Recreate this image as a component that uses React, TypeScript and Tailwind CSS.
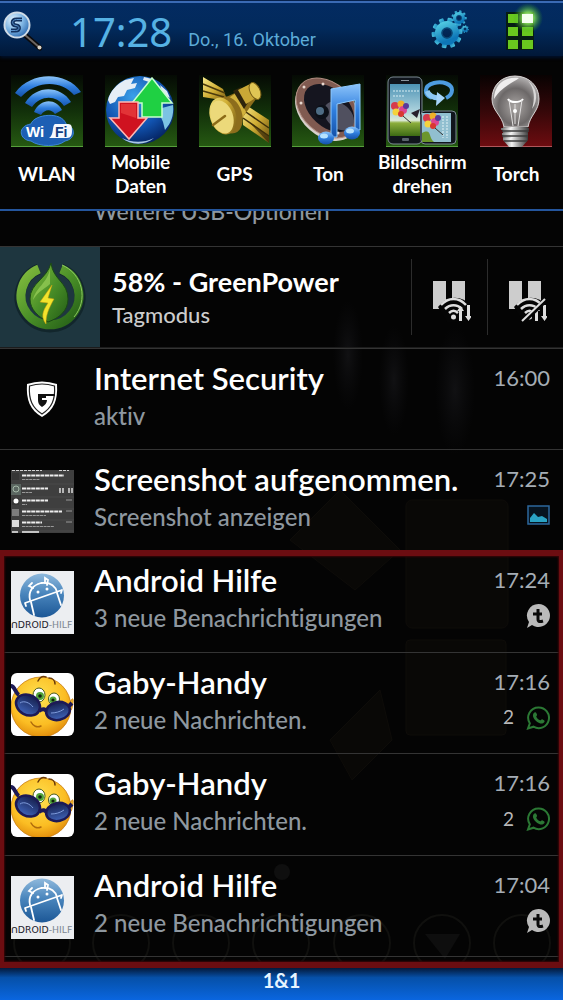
import type { ReactNode } from "react";

type Notice = {
  id: number;
  title: string;
  text: string;
  time: string;
  picture: ReactNode;
  badge?: ReactNode;
  count?: number;
};

function SearchIcon() {
  return (
    <svg viewBox="0 0 42 42" className="h-[42px] w-[42px]" aria-hidden="true">
      <defs>
        <radialGradient id="lens" cx="0.35" cy="0.3" r="0.8">
          <stop offset="0" stopColor="#e4f4ff" />
          <stop offset="0.5" stopColor="#7fb6e4" />
          <stop offset="1" stopColor="#1f5ea8" />
        </radialGradient>
      </defs>
      <path d="M25 26 40 39" stroke="#0a0a0c" strokeWidth="5" strokeLinecap="round" />
      <path d="M25 26 39 38" stroke="#6d6560" strokeWidth="2" />
      <circle cx="39.500" cy="38.500" r="2" fill="#d9d2c6" />
      <circle cx="17" cy="16" r="12.500" fill="url(#lens)" stroke="#cfdbe6" strokeWidth="2" />
      <path
        d="M22 10.500h-5.500c-5 0-5 5.500-.5 6 4 .5 4 5-.5 5H11"
        fill="none"
        stroke="#12315f"
        strokeWidth="4"
      />
      <path
        d="M22 10.500h-5.500c-5 0-5 5.500-.5 6 4 .5 4 5-.5 5H11"
        fill="none"
        stroke="#5a93cc"
        strokeWidth="1"
      />
    </svg>
  );
}

function Gear({ x, y, r, teeth }: { x: number; y: number; r: number; teeth: number }) {
  const angles = Array.from({ length: teeth }, (_, i) => (i * 360) / teeth);
  return (
    <g transform={`translate(${x} ${y})`}>
      {angles.map((a) => (
        <rect
          key={a}
          x={-r * 0.2}
          y={-r * 1.28}
          width={r * 0.4}
          height={r * 0.6}
          rx={r * 0.08}
          fill="url(#gear)"
          transform={`rotate(${a + 12})`}
        />
      ))}
      <circle r={r * 0.72} fill="none" stroke="url(#gear)" strokeWidth={r * 0.56} />
      <circle r={r * 0.42} fill="none" stroke="#0b4a78" strokeWidth={r * 0.12} />
    </g>
  );
}

function GearsIcon() {
  return (
    <svg viewBox="0 0 42 42" className="h-[42px] w-[42px]" aria-hidden="true">
      <defs>
        <linearGradient id="gear" x1="0" y1="0" x2="0.4" y2="1">
          <stop offset="0" stopColor="#4fc8e0" />
          <stop offset="1" stopColor="#0d76b8" />
        </linearGradient>
      </defs>
      <Gear x={18} y={24} r={12} teeth={10} />
      <Gear x={30} y={9} r={6} teeth={9} />
      <Gear x={36} y={20} r={3} teeth={8} />
    </svg>
  );
}

function GridIcon() {
  return (
    <svg viewBox="0 0 36 44" className="h-11 w-9 overflow-visible" aria-hidden="true">
      <defs>
        <radialGradient id="glow">
          <stop offset="0" stopColor="#ffffff" />
          <stop offset="0.4" stopColor="#8df05a" stopOpacity="0.8" />
          <stop offset="1" stopColor="#2f9a1a" stopOpacity="0" />
        </radialGradient>
      </defs>
      <rect x="3" y="4" width="28" height="38" fill="#061c14" />
      <g fill="#69c81e">
        <rect x="5" y="6" width="10" height="9" />
        <rect x="5" y="19" width="10" height="9" />
        <rect x="19" y="19" width="11" height="9" />
        <rect x="5" y="32" width="10" height="9" />
        <rect x="19" y="32" width="11" height="9" />
      </g>
      <circle cx="25" cy="10" r="15" fill="url(#glow)" />
      <rect x="19" y="6" width="11" height="9" fill="#f4fff0" />
    </svg>
  );
}

function Tile({ red, children }: { red?: boolean; children: ReactNode }) {
  return (
    <svg viewBox="0 0 94 76" className="h-[76px] w-[94px]" aria-hidden="true">
      <rect x="11" y="2" width="72" height="72" fill={red ? "url(#tileRed)" : "url(#tileGreen)"} />
      <path d="M11 73.500h72" stroke={red ? "#b0565a" : "#57a03c"} />
      {children}
    </svg>
  );
}

// gradients that several drawings share
function SharedDefs() {
  return (
    <svg className="absolute h-0 w-0" aria-hidden="true">
      <defs>
        <linearGradient id="tileGreen" x1="0" y1="0" x2="0" y2="1">
          <stop offset="0" stopColor="#050a04" />
          <stop offset="0.5" stopColor="#12300a" />
          <stop offset="1" stopColor="#265a12" />
        </linearGradient>
        <linearGradient id="tileRed" x1="0" y1="0" x2="0" y2="1">
          <stop offset="0" stopColor="#080202" />
          <stop offset="0.5" stopColor="#350709" />
          <stop offset="1" stopColor="#6e0c10" />
        </linearGradient>
        <linearGradient id="blue" x1="0" y1="0" x2="0" y2="1">
          <stop offset="0" stopColor="#8cc4fa" />
          <stop offset="0.5" stopColor="#2f7ede" />
          <stop offset="1" stopColor="#1450a8" />
        </linearGradient>
        <linearGradient id="gold" x1="0" y1="0" x2="1" y2="1">
          <stop offset="0" stopColor="#f6e98a" />
          <stop offset="0.5" stopColor="#d0ae34" />
          <stop offset="1" stopColor="#6a5010" />
        </linearGradient>
        <radialGradient id="earth" cx="0.4" cy="0.3" r="0.75">
          <stop offset="0" stopColor="#3aa0ea" />
          <stop offset="0.6" stopColor="#1153b0" />
          <stop offset="1" stopColor="#04205c" />
        </radialGradient>
        <linearGradient id="screen" x1="0" y1="0" x2="0" y2="1">
          <stop offset="0" stopColor="#4d93b4" />
          <stop offset="0.5" stopColor="#a9d0dc" />
          <stop offset="0.7" stopColor="#dbe9d6" />
          <stop offset="0.75" stopColor="#8cae3c" />
          <stop offset="1" stopColor="#3c6a14" />
        </linearGradient>
        <radialGradient id="bulb" cx="0.5" cy="0.6" r="0.6">
          <stop offset="0" stopColor="#aaa6a4" />
          <stop offset="0.6" stopColor="#6c6868" />
          <stop offset="1" stopColor="#b5b2b2" />
        </radialGradient>
        <linearGradient id="metal" x1="0" y1="0" x2="1" y2="0">
          <stop offset="0" stopColor="#6b6b6b" />
          <stop offset="0.35" stopColor="#f4f4f4" />
          <stop offset="0.7" stopColor="#8a8a8a" />
          <stop offset="1" stopColor="#3a3a3a" />
        </linearGradient>
        <linearGradient id="leaf" x1="0" y1="0" x2="1" y2="1">
          <stop offset="0" stopColor="#84bc3e" />
          <stop offset="0.5" stopColor="#4a9028" />
          <stop offset="1" stopColor="#235c16" />
        </linearGradient>
        <linearGradient id="ball" x1="0" y1="0" x2="0" y2="1">
          <stop offset="0" stopColor="#8fb9dc" />
          <stop offset="0.45" stopColor="#4a86bd" />
          <stop offset="1" stopColor="#1c5796" />
        </linearGradient>
        <radialGradient id="face" cx="0.45" cy="0.35" r="0.7">
          <stop offset="0" stopColor="#ffe352" />
          <stop offset="0.65" stopColor="#fbbd23" />
          <stop offset="1" stopColor="#dd8508" />
        </radialGradient>
        <linearGradient id="shade" x1="0" y1="0" x2="0" y2="1">
          <stop offset="0" stopColor="#16204e" />
          <stop offset="1" stopColor="#3f63b8" />
        </linearGradient>
        <radialGradient id="flame">
          <stop offset="0" stopColor="#111113" />
          <stop offset="1" stopColor="#0c0c0e" stopOpacity="0" />
        </radialGradient>
      </defs>
    </svg>
  );
}

function WifiTile() {
  return (
    <Tile>
      <g fill="url(#blue)">
        <path d="M15 20C31-2 66-2 81 19L74 22C61 7 37 7 21 24Z" />
        <path d="M25 30C36 12 60 12 71 29L64 33C56 22 41 22 32 34Z" />
        <path d="M34 39C40 25 56 25 62 37L55 41C51 36 45 36 41 42Z" />
      </g>
      <path
        d="M31 51c3-10 31-13 35 0 10 3 10 15-1 17-7 6-26 6-34 0-12-1-14-15 0-17Z"
        fill="#1d5fb4"
        stroke="#3c85d8"
      />
      <path d="M55 51h13c4 0 4 3 4 7s-1 7-5 7H49c5-2 3-13 6-14Z" fill="#f4f8ff" />
      <text x="26" y="64" fontSize="15" fontWeight="700" fontFamily="Liberation Sans, sans-serif" fill="#fff">
        Wi
      </text>
      <text x="55" y="64" fontSize="14" fontWeight="700" fontFamily="Liberation Sans, sans-serif" fill="#123c80">
        Fi
      </text>
    </Tile>
  );
}

function DataTile() {
  return (
    <Tile>
      <circle cx="46" cy="37" r="34" fill="url(#earth)" />
      <path d="M14 27c2-9 9-16 17-20l9-2-3 6 6-1-2 5-8 2-3 6-6 1-3 5-5 2Z" fill="#e6eef6" />
      <path d="m50 4 8 2-3 3-6-2ZM66 12l7 6 3 7-7-4Z" fill="#dfeaf4" />
      <path d="m68 35 11-3c1 11-2 18-8 25l-2-8-3-7Z" fill="#7cc3e4" />
      <path d="M28 65c8 4 20 6 32 0-9 8-24 7-32 0Z" fill="#a9c8e6" />
      <path d="m58 5 20 25H68v14H48V30H38Z" fill="#1fd043" stroke="#c8ffd0" strokeWidth="1.500" />
      <path d="M25 29h19v16h9L35 66 16 45h9Z" fill="#cf1220" stroke="#ffb9b4" strokeWidth="1.500" />
      <path d="M27 31h15v14L27 40Z" fill="#ee4a48" opacity="0.6" />
    </Tile>
  );
}

function GpsTile() {
  return (
    <Tile>
      <path d="m15 4 20 12 5 13-7-2-18-3Z" fill="url(#gold)" />
      <path d="m15 11 22 9M15 18l21 6" stroke="#4a3a0c" strokeWidth="1.500" />
      <path d="m55 30 26 17v23L55 52Z" fill="url(#gold)" />
      <path d="m55 37 26 18M55 45l26 18" stroke="#3e300a" strokeWidth="1.500" />
      <path d="m62 50 19 13v7Z" fill="#3a2c0a" opacity="0.7" />
      <path d="M36 25 62 13l6 13-16 22-10 9Z" fill="#8a6c1a" />
      <path d="m39 26 9-6 10 19-6 10Z" fill="#d2b23c" />
      <path d="m45 18 8-4 8 14-5 8Z" fill="#2d240c" />
      <path d="m50 17 14-7 7 13-13 8Z" fill="#c9a836" />
      <ellipse cx="67" cy="18" rx="5" ry="9" fill="#e0c654" stroke="#725a14" transform="rotate(-25 67 18)" />
      <ellipse cx="41" cy="42" rx="13" ry="19" fill="#8c6d1c" transform="rotate(-18 41 42)" />
      <ellipse cx="35" cy="43" rx="13" ry="19" fill="url(#gold)" transform="rotate(-18 35 43)" />
      <ellipse cx="34" cy="44" rx="11" ry="17" fill="#ecd97a" transform="rotate(-18 34 44)" />
      <path d="m25 52 12-9" stroke="#8c6c18" strokeWidth="2.500" strokeLinecap="round" />
    </Tile>
  );
}

function SoundTile() {
  return (
    <Tile>
      <ellipse cx="45" cy="38" rx="25" ry="35" fill="#d8d0cc" transform="rotate(-48 45 38)" />
      <ellipse cx="46" cy="35" rx="25" ry="35" fill="#805a50" stroke="#b08c80" transform="rotate(-48 46 35)" />
      <ellipse cx="48" cy="35" rx="19" ry="29" fill="#15151f" transform="rotate(-48 48 35)" />
      <ellipse cx="58" cy="43" rx="12" ry="17" fill="#50505f" transform="rotate(-48 58 43)" />
      <circle cx="41" cy="39" r="7" fill="#0c1018" />
      <circle cx="39" cy="38" r="4" fill="#4e6c84" />
      <g fill="#e8d8d0">
        <circle cx="23" cy="14" r="1.500" />
        <circle cx="42" cy="11" r="1.500" />
        <circle cx="20" cy="30" r="1.500" />
        <circle cx="57" cy="60" r="1.500" />
      </g>
      <path d="M50 16 79 11v46h-5V27l-18 4v33h-6Z" fill="url(#blue)" stroke="#8ccaff" />
      <ellipse cx="45" cy="65" rx="8" ry="6.500" fill="url(#blue)" />
      <ellipse cx="71" cy="60" rx="8" ry="6.500" fill="url(#blue)" />
      <ellipse cx="43" cy="63" rx="4" ry="2.500" fill="#b6e2ff" />
      <ellipse cx="69" cy="58" rx="4" ry="2.500" fill="#b6e2ff" />
    </Tile>
  );
}

function Balloons() {
  return (
    <g>
      <circle cx="4" cy="4" r="4" fill="#d63a4c" />
      <circle cx="10" cy="2" r="3.500" fill="#f0b028" />
      <circle cx="12" cy="8" r="4" fill="#dc4590" />
      <circle cx="5" cy="10" r="3.500" fill="#f4d23c" />
      <circle cx="15" cy="4" r="3" fill="#5a3a9a" />
      <circle cx="10" cy="12" r="3" fill="#d83830" />
      <path d="m12 14 8 7" stroke="#333" />
    </g>
  );
}

function RotateTile() {
  return (
    <Tile>
      <rect x="13" y="4" width="34" height="67" rx="5" fill="#10151c" stroke="#7c8a94" />
      <rect x="15" y="11" width="30" height="52" fill="url(#screen)" />
      <path d="M26 7.500h8" stroke="#8a949c" />
      <path d="M18 18h26M18 23h12" stroke="#d8eef4" strokeDasharray="2 1" />
      <g transform="translate(16 29)">
        <Balloons />
      </g>
      <path d="m36 40 9-4-3 9Z" fill="#28202c" />
      <rect x="27" y="65" width="7" height="3" rx="1" fill="#59636c" />
      <rect x="46" y="38" width="35" height="33" rx="4" fill="#10151c" stroke="#7c8a94" />
      <rect x="47" y="40" width="29" height="29" fill="#91bfd0" />
      <path d="M47 60c10-5 6 4 12 9H47Z" fill="#6c962c" />
      <path d="M68 43v22M72 43v22" stroke="#e2f2f6" strokeDasharray="2 1" />
      <g transform="translate(48 41)">
        <Balloons />
      </g>
      <path
        d="M57 25c-8-3-9-12 2-15 9-2 18 1 18 7 0 3-2 6-6 8"
        fill="none"
        stroke="#4d9ce0"
        strokeWidth="4"
      />
      <path d="M52 18c2 5 7 7 12 7" fill="none" stroke="#8cc8f4" strokeWidth="5" />
      <path d="m62 19 8 6-9 8Z" fill="#a6d6fa" />
    </Tile>
  );
}

function TorchTile() {
  return (
    <Tile red>
      <path
        d="M46 3c14 0 24 10 24 23 0 12-9 16-11 28H35C33 42 23 38 23 26 23 13 32 3 46 3Z"
        fill="url(#bulb)"
        stroke="#d6d3d3"
      />
      <path d="M25 26C25 12 36 3 50 5c-6 5-17 8-25 21Z" fill="#f0eeee" />
      <path d="M59 8c9 6 11 19 4 28 3-10 3-20-4-28Z" fill="#d8d6d6" />
      <path d="M39 26c2 4 12 4 15 0" fill="none" stroke="#fff" strokeWidth="2" />
      <path d="m40 27 4 26M53 27l-4 26M46 31v20" stroke="#e2e0e0" />
      <circle cx="46" cy="38" r="2" fill="#fff" />
      <path d="M34 54h25v13l-6 7H40l-6-7Z" fill="url(#metal)" />
      <path d="M33 58h27M33 63h26M35 68h23" stroke="#3c3c3c" strokeWidth="1.500" />
      <path d="M32 55h28v2H32ZM33 60h26v2H33ZM34 65h24v2H34Z" fill="url(#metal)" />
    </Tile>
  );
}

function PowerLogo() {
  return (
    <svg viewBox="0 0 100 100" className="h-[100px] w-[100px] bg-[#1e363f]" aria-hidden="true">
      <path d="M61 22a30 30 0 1 1-22 0" fill="none" stroke="#12262c" strokeWidth="11" />
      <path d="M61 22a29 29 0 1 1-22 0" fill="none" stroke="url(#leaf)" strokeWidth="9" />
      <path d="M62 18a33 33 0 0 1 12 52" fill="none" stroke="#8cc860" strokeWidth="1" />
      <path
        d="M51 16c2 17 17 19 17 36 0 12-9 19-20 23-9-5-18-12-18-23 0-16 17-20 21-36Z"
        fill="url(#leaf)"
        stroke="#1a4a14"
      />
      <path d="M50 21c-2 15-15 20-17 32 5-9 13-12 17-16Z" fill="#9ad05a" opacity="0.7" />
      <path d="m52 38-12 17 8 1c-6 9-7 14-2 21 0-9 2-14 8-25l-6-1Z" fill="#f2e42c" stroke="#d39c10" strokeWidth="0.500" />
    </svg>
  );
}

function PauseDataIcon({ off }: { off?: boolean }) {
  return (
    <svg viewBox="0 0 38 42" className="h-[42px] w-[38px]" aria-hidden="true">
      <path d="M0 1h13v28H0ZM19 1h13v28H19Z" fill="#cdcdcd" />
      <path d="M5 27a20 20 0 0 1 33-1l-5 16H14Z" fill="#050505" />
      <g fill="none" stroke="#dedede" strokeWidth="2.500">
        <path d="M8 25c7-8 18-8 25 0" />
        <path d="M12 29c5-5 12-5 17 0" />
        <path d="M16 33c3-3 6-3 9 0" />
      </g>
      <circle cx="20.500" cy="37" r="2.500" fill="#dedede" />
      <path d="M27.500 41V28M35.500 25v13" stroke="#dedede" strokeWidth="3" />
      <path d="m24 31 3.500-5 3.500 5ZM32 36l3.500 5 3.500-5Z" fill="#dedede" />
      {off && (
        <>
          <path d="M14 42 37 20" stroke="#050505" strokeWidth="4.500" />
          <path d="M13 41 36 19" stroke="#dedede" strokeWidth="2" />
        </>
      )}
    </svg>
  );
}

function ShieldPicture() {
  return (
    <svg viewBox="0 0 63 63" className="h-[63px] w-[63px]" aria-hidden="true">
      <path d="M16 15q15-5 30 0c1 16-3 26-15 33C19 41 15 31 16 15Z" fill="#fff" />
      <path d="M18.500 17q12.500-4 25 0c1 14-3 22-12.500 28C21.500 39 17.500 31 18.500 17Z" fill="none" stroke="#222" strokeWidth="1.200" />
      <path d="M27 25h8v4h-4v2h5c0 3-2 5-5 7-3-2-4-4-4-7Z" fill="#111" />
      <path d="M35 26h9" stroke="#111" strokeWidth="2" />
    </svg>
  );
}

function ScreenshotPicture() {
  const rows = [5, 18, 30, 41, 52];
  return (
    <svg viewBox="0 0 63 63" className="h-[63px] w-[63px]" aria-hidden="true">
      <rect width="63" height="63" fill="#3f3f3f" />
      <path d="M1 .5h30M48 .5h10" stroke="#d0d0d0" strokeDasharray="3 1" />
      {rows.map((y, i) => (
        <g key={y}>
          <rect x="1" y={y - 2} width="7" height="7" fill={i === 4 ? "#ddd" : i === 3 ? "#7d7d7d" : "#363636"} />
          <path d={`M11 ${y + 0.5}h${[42, 26, 26, 40, 20][i]}`} stroke="#eee" strokeWidth="2" strokeDasharray="4 0.600" />
          <path d={`M11 ${y + 4.5}h${[18, 10, 5, 24, 32][i]}`} stroke="#999" strokeDasharray="3 0.600" />
          <path d={`M11 ${y + 9}h52`} stroke="#555" strokeWidth="0.500" />
          {i > 1 && <path d={`M55 ${y}h6`} stroke="#999" />}
        </g>
      ))}
      <rect y="14" width="10" height="11" fill="#5b6661" />
      <circle cx="5" cy="19" r="3" fill="none" stroke="#a4b8a8" />
      <path d="M49 18v5M52 18v5M58 18v5M61 18v5" stroke="#ddd" strokeWidth="1.500" />
      <circle cx="5" cy="31" r="2.500" fill="#fff" />
      <path d="M1 62h6M11 62h17" stroke="#eee" strokeWidth="1.500" />
    </svg>
  );
}

function AndroidPicture() {
  return (
    <svg viewBox="0 0 63 63" className="h-[63px] w-[63px] bg-[#eceef1]" aria-hidden="true">
      <circle cx="31" cy="24.500" r="22" fill="url(#ball)" />
      <g fill="none" stroke="#fff" strokeWidth="1.800" strokeLinecap="round">
        <path d="M19 29c-2-9 3-15 11-17 8-1 14 2 16 9" />
        <path d="m14 32 37-13M14 32l1 3M51 19l-1 3" />
        <path d="m20 31 3 13M46 22l4 12" />
        <path d="m22 17-4-2 3-3M34 12V7l3 2-1 5" />
      </g>
      <circle cx="27" cy="21" r="1.500" fill="#fff" />
      <circle cx="36" cy="18" r="1.500" fill="#fff" />
      <text x="0" y="57" fontSize="9.300" fontFamily="DejaVu Sans, sans-serif" fill="#1c222c">
        ᑎDROID
        <tspan fill="#7d8792">-HILF</tspan>
      </text>
    </svg>
  );
}

function SmileyPicture() {
  return (
    <svg viewBox="0 0 63 63" className="h-[63px] w-[63px] rounded-md bg-white" aria-hidden="true">
      <circle cx="30" cy="34" r="30" fill="url(#face)" stroke="#c87c10" strokeWidth="0.800" />
      <path d="M59 30c2-6 4-5 3 0s-1 8-4 8" fill="#f0b82c" stroke="#c87c10" strokeWidth="0.800" />
      <g fill="none" stroke="#6c3c08" strokeWidth="1.500" strokeLinecap="round">
        <path d="M27 8c2-4 5-5 8-4M38 5c4 0 6 3 6 6" />
        <path d="M20 49c2 4 6 6 10 4" stroke="#b06c0c" />
      </g>
      <ellipse cx="28" cy="22" rx="6" ry="7" fill="#fff" stroke="#4a5a1c" />
      <ellipse cx="43" cy="26" rx="5.500" ry="6" fill="#fff" stroke="#4a5a1c" />
      <circle cx="29" cy="23" r="4" fill="#52a43c" />
      <circle cx="42" cy="27" r="3.500" fill="#52a43c" />
      <circle cx="29" cy="23" r="1.800" fill="#10200c" />
      <circle cx="42" cy="27" r="1.600" fill="#10200c" />
      <path d="M0 13c4 0 4 7 8 9M28 38c4-3 6-2 9 1M57 34l4-4" fill="none" stroke="#1d1a56" strokeWidth="4" />
      <ellipse cx="17" cy="32" rx="12.500" ry="10" fill="url(#shade)" stroke="#1d1a56" strokeWidth="2.500" transform="rotate(28 17 32)" />
      <ellipse cx="47" cy="38" rx="12" ry="9" fill="url(#shade)" stroke="#1d1a56" strokeWidth="2.500" transform="rotate(-12 47 38)" />
      <path d="M9 30c4-3 10 0 13 4M40 40c4 0 9-1 13-4" fill="none" stroke="#7f9cdc" strokeWidth="1" />
    </svg>
  );
}

function ImageBadge() {
  return (
    <svg viewBox="0 0 24 24" className="size-6" aria-hidden="true">
      <rect x="2" y="3" width="21" height="18" fill="#061420" stroke="#2c679c" strokeWidth="1.500" />
      <path d="M4 19v-4l4-5 4 4 4-1 5 3v3Z" fill="#2aa3c4" />
    </svg>
  );
}

function TapatalkBadge() {
  return (
    <svg viewBox="0 0 24 24" className="size-6" aria-hidden="true">
      <path d="M12.500 0A11.500 11.500 0 1 1 6 21L1 24l2-6A11.500 11.500 0 0 1 12.500 0Z" fill="#bababa" />
      <path d="M12 5v10c0 3 2 3 5 2M7 10h9" fill="none" stroke="#0a0a0a" strokeWidth="3" />
    </svg>
  );
}

function WhatsAppBadge() {
  return (
    <svg viewBox="0 0 24 24" className="size-6" aria-hidden="true">
      <path
        d="M12.500 1.500a10.300 10.300 0 1 1-5 19.200L2 22.500l1.800-5.200A10.300 10.300 0 0 1 12.500 1.500Z"
        fill="none"
        stroke="#2b7834"
        strokeWidth="2"
      />
      <path
        d="M8.500 6.500c.6-.5 1.500-.3 1.800.4l.8 1.900c.2.500-1 1.400-.8 1.900.8 1.700 2.200 2.900 3.900 3.600.5.200 1.400-1.300 2-1l1.800.9c.8.400.7 1.400.2 2-1.200 1.500-3.200 1.500-5 .7-2.700-1.100-5-3.300-6-6-.6-1.700-.2-3.400 1.300-4.400Z"
        fill="#2b7834"
      />
    </svg>
  );
}

const toggles = [
  { label: "WLAN", icon: <WifiTile /> },
  { label: "Mobile Daten", icon: <DataTile /> },
  { label: "GPS", icon: <GpsTile /> },
  { label: "Ton", icon: <SoundTile /> },
  { label: "Bildschirm drehen", icon: <RotateTile /> },
  { label: "Torch", icon: <TorchTile /> },
];

const system: Notice[] = [
  { id: 1, title: "Internet Security", text: "aktiv", time: "16:00", picture: <ShieldPicture /> },
  {
    id: 2,
    title: "Screenshot aufgenommen.",
    text: "Screenshot anzeigen",
    time: "17:25",
    picture: <ScreenshotPicture />,
    badge: <ImageBadge />,
  },
];

const messages: Notice[] = [
  {
    id: 3,
    title: "Android Hilfe",
    text: "3 neue Benachrichtigungen",
    time: "17:24",
    picture: <AndroidPicture />,
    badge: <TapatalkBadge />,
  },
  {
    id: 4,
    title: "Gaby-Handy",
    text: "2 neue Nachrichten.",
    time: "17:16",
    picture: <SmileyPicture />,
    badge: <WhatsAppBadge />,
    count: 2,
  },
  {
    id: 5,
    title: "Gaby-Handy",
    text: "2 neue Nachrichten.",
    time: "17:16",
    picture: <SmileyPicture />,
    badge: <WhatsAppBadge />,
    count: 2,
  },
  {
    id: 6,
    title: "Android Hilfe",
    text: "2 neue Benachrichtigungen",
    time: "17:04",
    picture: <AndroidPicture />,
    badge: <TapatalkBadge />,
  },
];

function NoticeRow({ notice }: { notice: Notice }) {
  return (
    <li className="flex min-h-[101px] flex-1 items-start border-t border-[#343434] pr-[13px] pl-[11px]">
      <div className="mt-5 mr-5 shrink-0">{notice.picture}</div>
      <div className="min-w-0 flex-1 pt-[11px]">
        <h2 className="text-[31px] leading-9 font-semibold whitespace-nowrap text-white">{notice.title}</h2>
        <p className="text-[24px] leading-10 font-medium whitespace-nowrap text-[#8e979f]">{notice.text}</p>
      </div>
      <div className="flex flex-col items-end pt-[11px]">
        <time className="text-[22px] leading-9 text-[#a5adb5]">{notice.time}</time>
        <div className="flex h-9 items-center gap-3">
          {notice.count && <span className="text-[19px] text-[#b8b8b8]">{notice.count}</span>}
          {notice.badge}
        </div>
      </div>
    </li>
  );
}

// dim wallpaper behind the panel
function Wallpaper() {
  return (
    <svg
      viewBox="0 0 563 1000"
      preserveAspectRatio="none"
      className="pointer-events-none absolute inset-0 h-full w-full"
      aria-hidden="true"
    >
      <g fill="url(#flame)">
        <ellipse cx="348" cy="355" rx="15" ry="55" />
        <ellipse cx="394" cy="380" rx="15" ry="55" />
        <ellipse cx="455" cy="390" rx="20" ry="65" />
      </g>
      <g fill="#090806" stroke="#0e0c09">
        <rect x="406" y="500" width="102" height="128" rx="6" />
        <rect x="406" y="640" width="100" height="95" rx="4" />
        <path d="m290 540 50-50 60 60-45 40ZM330 740l50-50 12 50-40 40Z" />
      </g>
      <g fill="none" stroke="#10100e" strokeWidth="2">
        <circle cx="42" cy="943" r="28" />
        <circle cx="121" cy="943" r="28" />
        <circle cx="201" cy="943" r="28" />
        <circle cx="281" cy="943" r="28" />
        <circle cx="362" cy="943" r="28" />
        <circle cx="442" cy="943" r="28" />
        <circle cx="522" cy="943" r="28" />
      </g>
      <path d="m425 934 20 25 15-25Z" fill="#0e0e0e" />
      <circle cx="282" cy="872" r="8" fill="#0f0f0f" />
    </svg>
  );
}

export default function App() {
  return (
    <div className="relative flex min-h-screen flex-col bg-[#040404] font-['Lato','Noto_Sans',sans-serif] [font-variant-ligatures:none]">
      <SharedDefs />
      <Wallpaper />
      <header className="relative flex h-14 items-center bg-linear-to-b from-[#032b62] via-[#022a5c] to-[#011838] pr-6 shadow-[0_2px_3px_#01102a]">
        <div className="absolute inset-x-0 top-0 h-[3px] border-b-2 border-[#3a6ab4] bg-[#06214c]" />
        <button aria-label="Suche" className="mt-1">
          <SearchIcon />
        </button>
        <time className="mt-2 ml-7 font-['Noto_Sans',sans-serif] text-[40px] leading-none text-[#56b2e4]">17:28</time>
        <span className="mt-6 ml-4 font-['Roboto',sans-serif] text-[18px] leading-none whitespace-nowrap text-[#5cabd8]">
          Do., 16. Oktober
        </span>
        <div className="ml-auto flex items-center gap-8">
          <button aria-label="Einstellungen" className="mt-1">
            <GearsIcon />
          </button>
          <button aria-label="Schnellzugriff" className="mt-1">
            <GridIcon />
          </button>
        </div>
      </header>

      <nav className="relative grid h-[155px] grid-cols-6 border-b-2 border-[#24559c] pt-[17px]">
        {toggles.map((t) => (
          <button key={t.label} className="flex flex-col items-center text-white">
            {t.icon}
            <span className="flex h-[50px] items-center px-1 text-[19px] leading-6 font-bold">
              {t.label}
            </span>
          </button>
        ))}
      </nav>

      <main className="relative flex flex-1 flex-col">
        {/* scrolled half under the toggles */}
        <div className="flex h-[35px] items-start overflow-hidden pl-[94px]">
          <p className="-mt-[18px] text-[23px] leading-9 font-medium whitespace-nowrap text-[#8e979f]">
            Weitere USB-Optionen
          </p>
        </div>

        <section className="flex items-center border-t border-[#343434]">
          <PowerLogo />
          <div className="min-w-0 flex-1 pl-3">
            <h2 className="text-[27px] leading-9 font-bold whitespace-nowrap text-white">58% - GreenPower</h2>
            <p className="text-[22px] leading-[30px] font-medium text-[#cccccc]">Tagmodus</p>
          </div>
          <button
            aria-label="Daten pausieren"
            className="flex h-[76px] w-[76px] items-center justify-center border-l border-[#2c2c2c] pt-2 pl-1"
          >
            <PauseDataIcon />
          </button>
          <button
            aria-label="Pause aufheben"
            className="flex h-[76px] w-[76px] items-center justify-center border-l border-[#2c2c2c] pt-2 pl-1"
          >
            <PauseDataIcon off />
          </button>
        </section>

        <ul className="flex flex-col border-t border-[#1c1c1c]">
          {system.map((n) => (
            <NoticeRow key={n.id} notice={n} />
          ))}
        </ul>

        <div className="relative flex flex-1 flex-col pb-[11px]">
          <ul className="flex flex-1 flex-col border-b border-[#343434]">
            {messages.map((n) => (
              <NoticeRow key={n.id} notice={n} />
            ))}
          </ul>
          <div className="pointer-events-none absolute inset-0 border-x-4 border-y-[6px] border-[#6c0d11] shadow-[inset_0_0_2px_1px_#3a0608]" />
        </div>
      </main>

      <footer className="relative flex h-8 items-start justify-center bg-linear-to-b from-[#031a3c] via-[#0650a8] via-30% to-[#0a66e0] text-[20px] leading-6 font-bold text-[#e6f4ff]">
        1&amp;1
      </footer>
    </div>
  );
}
